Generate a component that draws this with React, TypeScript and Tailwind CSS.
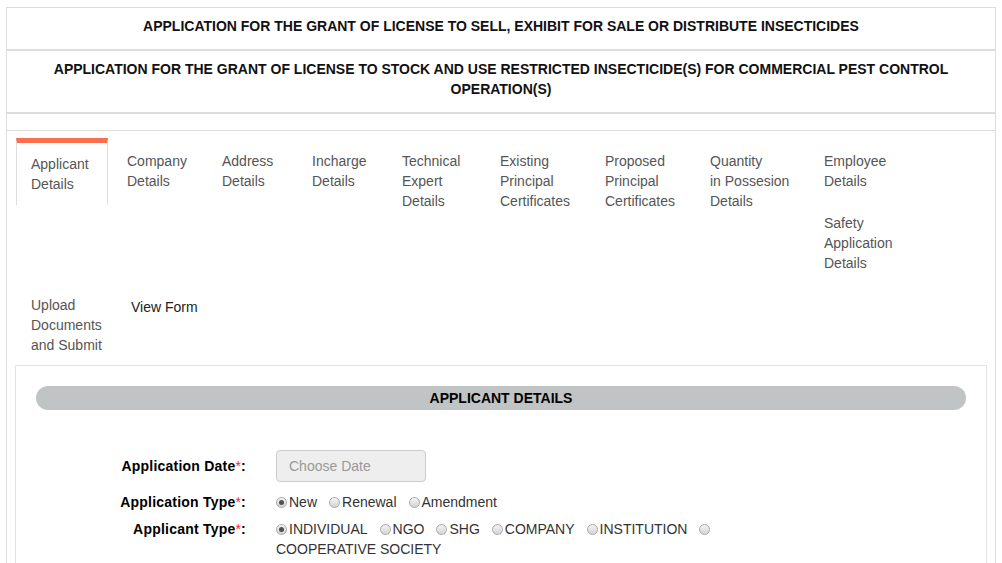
import React from "react";

type Tab = { cls: string; lines: string[] };

const row1: Tab[] = [
  { cls: "w-[95px]", lines: ["Company", "Details"] },
  { cls: "w-[90px]", lines: ["Address", "Details"] },
  { cls: "w-[90px]", lines: ["Incharge", "Details"] },
  { cls: "w-[98px]", lines: ["Technical", "Expert", "Details"] },
  { cls: "w-[105px]", lines: ["Existing", "Principal", "Certificates"] },
  { cls: "w-[105px]", lines: ["Proposed", "Principal", "Certificates"] },
  { cls: "w-[114px]", lines: ["Quantity", "in Possesion", "Details"] },
];

function Lines({ lines }: { lines: string[] }) {
  return (
    <>
      {lines.map((l, i) => (
        <div key={i} className="whitespace-nowrap">
          {l}
        </div>
      ))}
    </>
  );
}

function Radio({ checked }: { checked?: boolean }) {
  return (
    <span className="relative inline-block w-[11px] h-[11px] rounded-full border border-[#a9a9a9] bg-gradient-to-b from-[#f4f4f4] to-[#d4d4d4] align-[-1px] mr-[2px]">
      {checked && (
        <span className="absolute left-[2px] top-[2px] w-[5px] h-[5px] rounded-full bg-[#505050]" />
      )}
    </span>
  );
}

function Opt({ label, checked }: { label: string; checked?: boolean }) {
  return (
    <>
      <Radio checked={checked} />
      <span className="mr-[12px]">{label}</span>
    </>
  );
}

function Req({ children }: { children: React.ReactNode }) {
  return (
    <div className="text-right font-bold text-black tracking-[0.22px]">
      {children}
      <span className="text-[#ff2020] font-normal">*</span>:
    </div>
  );
}

export default function App() {
  return (
    <div className="font-['Liberation_Sans',Arial,sans-serif] text-[14px] leading-[20px] bg-white min-h-[563px] pt-[7px] px-[6px]">
      <div className="border border-[#dddddd] border-b-0 min-h-[600px]">
        <div className="pt-[8px] pb-[13px] px-[15px] text-center font-bold text-[#111] border-b-2 border-[#dddddd]">
          APPLICATION FOR THE GRANT OF LICENSE TO SELL, EXHIBIT FOR SALE OR DISTRIBUTE INSECTICIDES
        </div>
        <div className="pt-[8px] pb-[13px] px-[15px] text-center font-bold text-[#111] border-b-2 border-[#dddddd]">
          APPLICATION FOR THE GRANT OF LICENSE TO STOCK AND USE RESTRICTED INSECTICIDE(S) FOR COMMERCIAL PEST CONTROL OPERATION(S)
        </div>
        <div className="h-[17px] border-b border-[#dddddd]" />

        <div className="px-[8px] pt-[7px]">
          <div className="ml-[1px] text-[#555555]">
            <div className="flex items-start h-[145px]">
              <div className="w-[96px]">
                <div className="w-[92px] border-t-[5px] border-t-[#f96f50] border-x border-x-[#dddddd] pt-[11px] pb-[11px] pl-[14px] bg-white">
                  <Lines lines={["Applicant", "Details"]} />
                </div>
              </div>
              {row1.map((t, i) => (
                <div key={i} className={`${t.cls} pt-[13px] pb-[10px] pl-[15px]`}>
                  <Lines lines={t.lines} />
                </div>
              ))}
              <div className="flex flex-col">
                <div className="pt-[13px] pb-[10px] pl-[15px]">
                  <Lines lines={["Employee", "Details"]} />
                </div>
                <div className="pt-[12px] pb-[10px] pl-[15px]">
                  <Lines lines={["Safety", "Application", "Details"]} />
                </div>
              </div>
            </div>
            <div className="flex items-start">
              <div className="w-[100px] pt-[12px] pb-[10px] pl-[15px]">
                <Lines lines={["Upload", "Documents", "and Submit"]} />
              </div>
              <div className="pt-[14px] pl-[15px] text-[#222222]">View Form</div>
            </div>
          </div>

          <div className="border border-[#e3e3e3] pt-[20px] px-[20px] pb-[40px]">
            <div className="h-[24px] rounded-full bg-[#c1c4c4] text-center font-bold text-black leading-[24px]">
              APPLICANT DETAILS
            </div>

            <div className="mt-[40px] grid grid-cols-[210px_1fr] gap-x-[30px] items-center">
              <Req>Application Date</Req>
              <div className="w-[150px] h-[32px] rounded-[4px] border border-[#cccccc] bg-[#eeeeee] pl-[12px] flex items-center text-[#999999]">
                Choose Date
              </div>
            </div>

            <div className="mt-[10px] grid grid-cols-[210px_1fr] gap-x-[30px] items-start">
              <Req>Application Type</Req>
              <div className="text-[#333333]">
                <Opt label="New" checked />
                <Opt label="Renewal" />
                <Opt label="Amendment" />
              </div>
            </div>

            <div className="mt-[7px] grid grid-cols-[210px_1fr] gap-x-[30px] items-start">
              <Req>Applicant Type</Req>
              <div className="w-[490px] text-[#333333]">
                <Opt label="INDIVIDUAL" checked />
                <Opt label="NGO" />
                <Opt label="SHG" />
                <Opt label="COMPANY" />
                <Opt label="INSTITUTION" />
                <Opt label="COOPERATIVE SOCIETY" />
              </div>
            </div>
          </div>
        </div>
      </div>
    </div>
  );
}
